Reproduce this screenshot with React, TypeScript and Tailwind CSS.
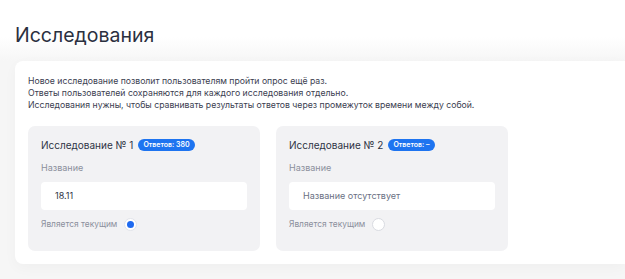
import React from 'react';

type Study = {
  id: number;
  answers: string;
  name: string;
  current: boolean;
};

const studies: Study[] = [
  { id: 1, answers: '380', name: '18.11', current: true },
  { id: 2, answers: '–', name: '', current: false },
];

function StudyCard({ study }: { study: Study }) {
  return (
    <div className="w-[232px] rounded-[7px] bg-[#f2f2f4] px-[13px] pt-[12px] pb-[20px]">
      <div className="flex h-[14px] items-center gap-[5px]">
        <span className="text-[10px] leading-[14px] text-[#2f3445]">Исследование № {study.id}</span>
        <span className="rounded-full bg-[#1e74f0] px-[5px] text-[7px] leading-[12px] font-semibold text-white">
          Ответов: {study.answers}
        </span>
      </div>
      <div className="mt-[10px] text-[9px] leading-[12px] text-[#8b8f9c]">Название</div>
      <div className="mt-[8px] flex h-[28px] items-center rounded-[4px] bg-white px-[14px] text-[9px]">
        {study.name ? (
          <span className="text-[#2f3445]">{study.name}</span>
        ) : (
          <span className="text-[#6a7083]">Название отсутствует</span>
        )}
      </div>
      <div className="mt-[8px] flex h-[13px] items-center gap-[7px]">
        <span className="text-[8.4px] text-[#8b8f9c]">Является текущим</span>
        {study.current ? (
          <span className="flex h-[13px] w-[13px] items-center justify-center rounded-full border border-[#e2e4ea] bg-white">
            <span className="h-[7px] w-[7px] rounded-full bg-[#1f6af0]" />
          </span>
        ) : (
          <span className="h-[13px] w-[13px] rounded-full border border-[#d9dbe1] bg-white" />
        )}
      </div>
    </div>
  );
}

export default function App() {
  return (
    <div
      className="min-h-[279px] bg-[#f6f6f6]"
      style={{ fontFamily: 'Inter, "Noto Sans", sans-serif' }}
    >
      <div className="bg-gradient-to-b from-white from-60% to-[#f6f6f6] px-[15px] pt-[23px] pb-[14px]">
        <h1 className="text-[19.5px] leading-[24px] text-[#2b3040]">Исследования</h1>
      </div>
      <div className="ml-[15px] rounded-l-[8px] bg-white pl-[13px] pt-[14px] pb-[13px] shadow-[0_4px_14px_rgba(0,0,0,0.03)]">
        <div className="text-[8.7px] leading-[12px] text-[#3b4050]">
          <p>Новое исследование позволит пользователям пройти опрос ещё раз.</p>
          <p>Ответы пользователей сохраняются для каждого исследования отдельно.</p>
          <p>Исследования нужны, чтобы сравнивать результаты ответов через промежуток времени между собой.</p>
        </div>
        <div className="mt-[15px] flex gap-[16px]">
          {studies.map((s) => (
            <StudyCard key={s.id} study={s} />
          ))}
        </div>
      </div>
    </div>
  );
}
